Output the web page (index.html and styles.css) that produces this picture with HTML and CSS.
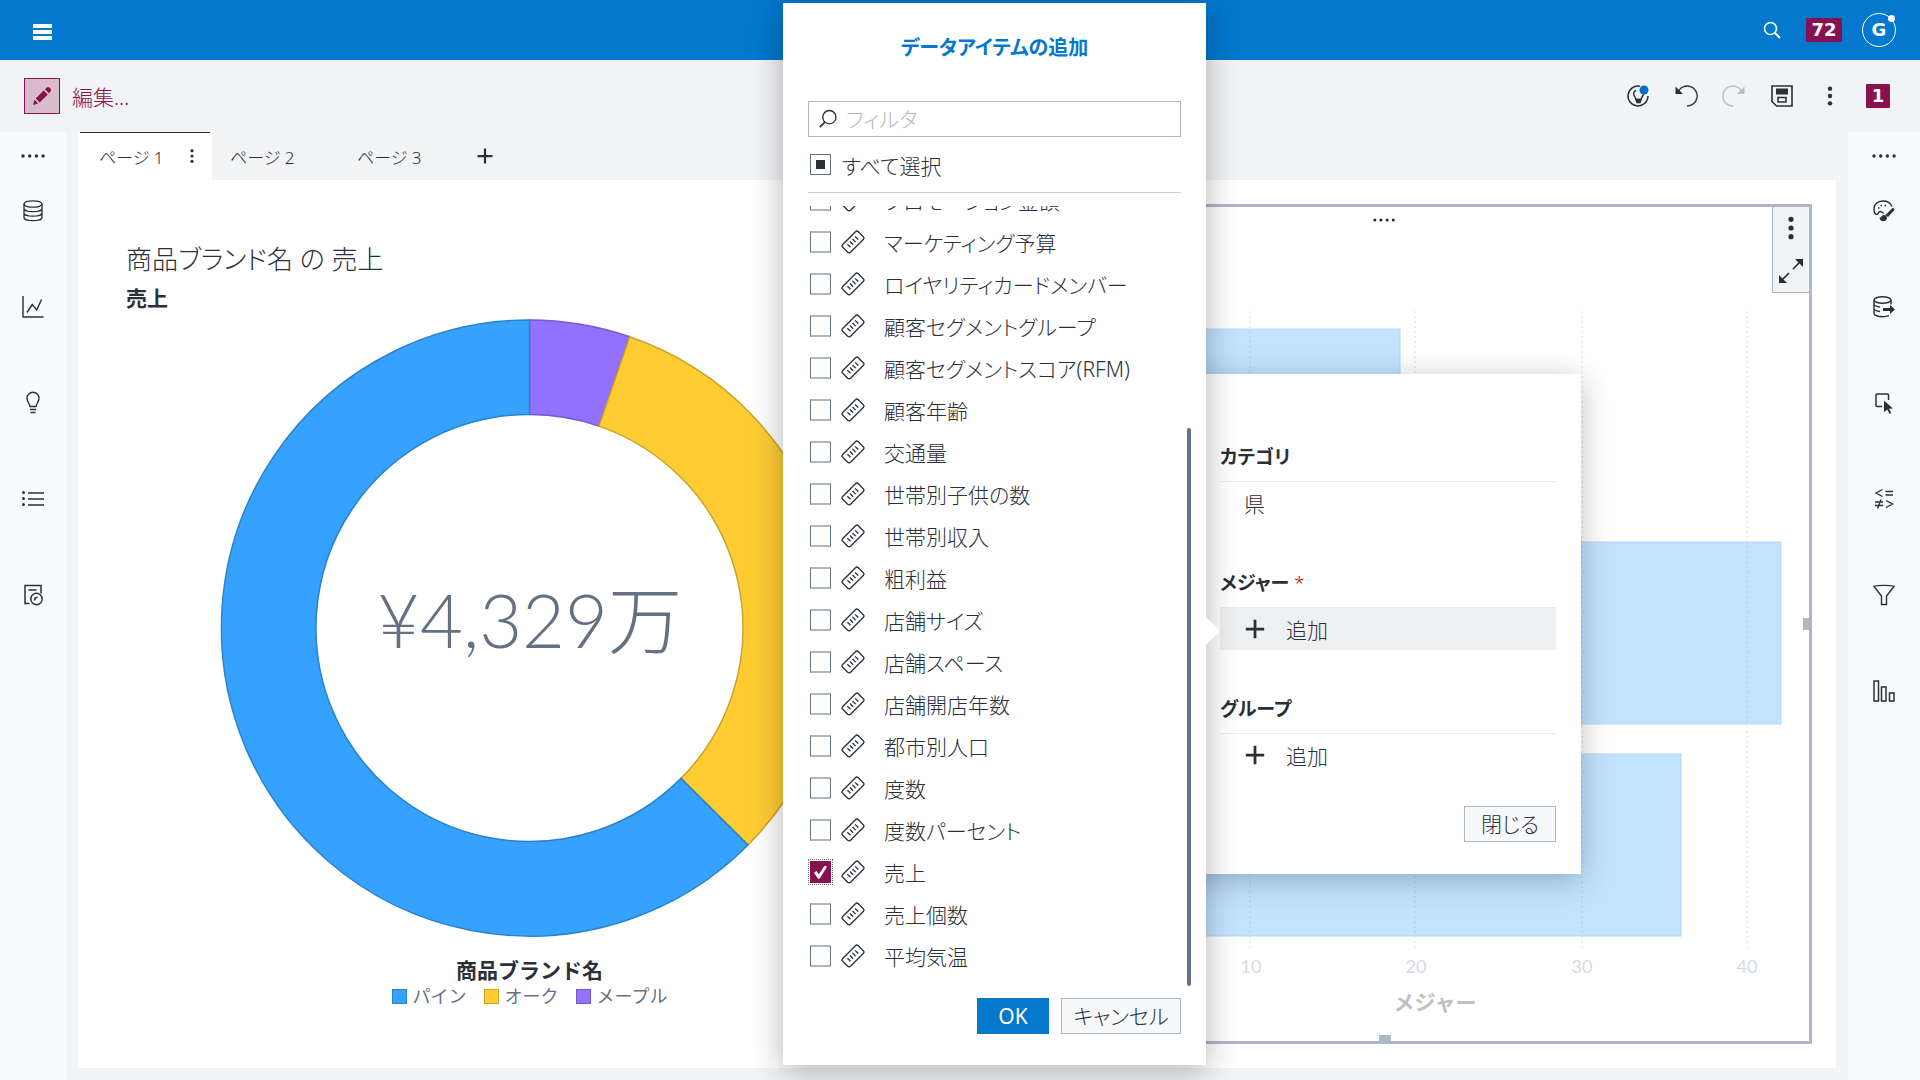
FILE: index.html
```html
<!DOCTYPE html>
<html lang="ja">
<head>
<meta charset="utf-8">
<meta name="viewport" content="width=device-width, initial-scale=1">
<title>レポートの編集</title>
<link rel="stylesheet" href="styles.css">
</head>
<body>
<svg class="sprite" aria-hidden="true">
  <symbol id="dots-h" viewBox="0 0 24 24"><g fill="currentColor"><circle cx="2" cy="12" r="1.7"/><circle cx="8.700" cy="12" r="1.7"/><circle cx="15.400" cy="12" r="1.7"/><circle cx="22.100" cy="12" r="1.7"/></g></symbol>
  <symbol id="dots-v" viewBox="0 0 24 24"><g fill="currentColor"><circle cx="12" cy="4" r="2.400"/><circle cx="12" cy="12" r="2.400"/><circle cx="12" cy="20" r="2.400"/></g></symbol>
  <symbol id="plus" viewBox="0 0 24 24"><path d="M12 2v20M2 12h20" fill="none" stroke="currentColor" stroke-width="3"/></symbol>
  <symbol id="ruler" viewBox="0 0 24 24"><g transform="rotate(-45 12 12)" fill="none" stroke="currentColor" stroke-width="1.300"><rect x="1" y="6.500" width="22" height="11" rx="2"/><path d="M6.500 9.500v4.500M10.200 9.500v4.500M13.800 9.500v4.500M17.500 9.500v4.500"/></g></symbol>
</svg>

<header class="topbar">
  <button class="icon-button menu-button" aria-label="メニュー">
    <svg width="20" height="16" viewBox="0 0 20 16"><path d="M0 0h19v4H0zM0 6h19v4H0zM0 12h19v4H0z" fill="currentColor"/></svg>
  </button>
  <div class="topbar-tools">
    <button class="icon-button" aria-label="検索">
      <svg width="18" height="18" viewBox="0 0 18 18" fill="none" stroke="currentColor" stroke-width="1.600"><circle cx="7.500" cy="7.500" r="6"/><path d="M12 12l5 5" stroke-width="2"/></svg>
    </button>
    <span class="badge badge-wide">72</span>
    <button class="avatar" aria-label="アカウント">G<span class="avatar-dot"></span></button>
  </div>
</header>

<div class="toolbar">
  <button class="edit-toggle">
    <span class="edit-icon"><svg width="20" height="20" viewBox="0 0 20 20" fill="currentColor"><path d="M1 19l1.400-5.200 3.800 3.800zM3.700 12.500l8-8 4 4-8 8zM13 3.300l1.700-1.700a2 2 0 0 1 2.700 0l1.200 1.200a2 2 0 0 1 0 2.700l-1.700 1.700z"/></svg></span>
    <span>編集...</span>
  </button>
  <div class="toolbar-tools">
    <button class="icon-button" aria-label="提案">
      <svg width="24" height="24" viewBox="0 0 24 24" fill="none" stroke="currentColor" stroke-width="1.500"><path d="M14 2.200A10 10 0 1 0 22 12"/><path d="M10 6.500C6.500 8 7.500 11 9 13l1 2.500h5l1-2.500c1-1.300 1.500-2 1.600-3" /><path d="M10 15.500h5l-1 3h-3z" fill="currentColor"/><circle cx="18" cy="6" r="4.500" class="dot-blue"/></svg>
    </button>
    <button class="icon-button" aria-label="元に戻す">
      <svg width="24" height="24" viewBox="0 0 24 24" fill="none" stroke="currentColor" stroke-width="1.400"><path d="M4.500 7A10 10 0 1 1 13 22"/><path d="M1.500 2.500V10H9z" fill="currentColor" stroke="none"/></svg>
    </button>
    <button class="icon-button" aria-label="やり直し" disabled>
      <svg width="24" height="24" viewBox="0 0 24 24" fill="none" stroke="currentColor" stroke-width="1.400"><path d="M19.500 7A10 10 0 1 0 11 22"/><path d="M22.500 2.500V10H15z" fill="currentColor" stroke="none"/></svg>
    </button>
    <button class="icon-button" aria-label="保存">
      <svg width="24" height="24" viewBox="0 0 24 24" fill="none" stroke="currentColor" stroke-width="1.600"><path d="M2 2h20v20H6.500L2 17.500z"/><path d="M6 4.500h12v6H6z" fill="currentColor" stroke="none"/><path d="M8 13.500h8v4.500H8z"/></svg>
    </button>
    <button class="icon-button" aria-label="その他"><svg width="22" height="22"><use href="#dots-v"/></svg></button>
    <span class="badge">1</span>
  </div>
</div>

<div class="workspace">
  <nav class="rail" aria-label="左ペイン">
    <button class="icon-button" aria-label="ペイン"><svg width="24" height="24"><use href="#dots-h"/></svg></button>
    <button class="icon-button" aria-label="データ"><svg width="24" height="24" viewBox="0 0 24 24" fill="none" stroke="currentColor" stroke-width="1.300"><ellipse cx="12" cy="5" rx="9" ry="3.200"/><path d="M3 5v13.500c0 1.800 4 3.200 9 3.200s9-1.400 9-3.200V5M3 9.500c0 1.800 4 3.200 9 3.200s9-1.400 9-3.200M3 14c0 1.800 4 3.200 9 3.200s9-1.400 9-3.200"/></svg></button>
    <button class="icon-button" aria-label="オブジェクト"><svg width="24" height="24" viewBox="0 0 24 24" fill="none" stroke="currentColor" stroke-width="1.400"><path d="M2 1v21h20.500M6 17.500l5.200-8 4.500 5.500 4.800-10.500"/></svg></button>
    <button class="icon-button" aria-label="提案"><svg width="24" height="24" viewBox="0 0 24 24" fill="none" stroke="currentColor" stroke-width="1.400"><path d="M9 15.500c0-2.500-3-4.500-3-8.300a6 6 0 0 1 12 0c0 3.800-3 5.800-3 8.300zM9 18.500h6M9.500 21.500h5"/></svg></button>
    <button class="icon-button" aria-label="アウトライン"><svg width="24" height="24" viewBox="0 0 24 24" fill="none" stroke="currentColor" stroke-width="1.500"><path d="M7 6h16M7 12h16M7 18h16"/><g fill="currentColor" stroke="none"><circle cx="2.500" cy="5.500" r="1.500"/><circle cx="2.500" cy="11.500" r="1.500"/><circle cx="2.500" cy="17.500" r="1.500"/></g></svg></button>
    <button class="icon-button" aria-label="レビュー"><svg width="24" height="24" viewBox="0 0 24 24" fill="none" stroke="currentColor" stroke-width="1.500"><path d="M8.500 20.500H4v-18h16v8M7.500 7h8"/><circle cx="15.500" cy="16" r="5.700"/><path d="M13.500 17.500c0-2 .8-3.200 3-3.300"/></svg></button>
  </nav>

  <main class="main">
    <div class="tabs" role="tablist">
      <div class="tab-current">
        <button class="tab" role="tab" aria-selected="true">ページ 1</button>
        <button class="icon-button" aria-label="ページのメニュー"><svg width="16" height="16"><use href="#dots-v"/></svg></button>
      </div>
      <button class="tab tab-idle" role="tab">ページ 2</button>
      <button class="tab tab-idle" role="tab">ページ 3</button>
      <button class="icon-button tab-add" aria-label="ページの追加"><svg width="18" height="18"><use href="#plus"/></svg></button>
    </div>

    <div class="canvas">
      <section class="donut-card">
        <h2 class="chart-title">商品ブランド名 の 売上</h2>
        <p class="chart-measure">売上</p>
        <svg class="donut" viewBox="0 0 620 620" role="img" aria-label="売上">
          <g stroke-width="1.500">
            <path class="slice-maple" d="M310 2A308 308 0 0 1 410.200 18.800L379.500 108.100A213.500 213.500 0 0 0 310 96.500Z"/>
            <path class="slice-oak" d="M410.200 18.800A308 308 0 0 1 528.500 527L461.500 460.400A213.500 213.500 0 0 0 379.500 108.100Z"/>
            <path class="slice-pine" d="M528.500 527A308 308 0 1 1 310 2V96.500A213.500 213.500 0 1 0 461.500 460.400Z"/>
          </g>
          <text class="donut-total" x="310" y="330" text-anchor="middle">¥4,329万</text>
        </svg>
        <h3 class="legend-title">商品ブランド名</h3>
        <ul class="legend">
          <li><span class="swatch swatch-pine"></span>パイン</li>
          <li><span class="swatch swatch-oak"></span>オーク</li>
          <li><span class="swatch swatch-maple"></span>メープル</li>
        </ul>
      </section>

      <section class="bar-card">
        <svg class="bars" viewBox="0 0 849 834" role="img" aria-label="メジャー">
          <g class="bar">
            <rect x="125" y="122" width="315" height="182"/>
            <rect x="125" y="335" width="696" height="182"/>
            <rect x="125" y="547" width="596" height="182"/>
          </g>
          <path class="gridline" d="M290 104V744M455 104V744M622 104V744M787 104V744"/>
          <g class="tick" text-anchor="middle"><text x="291" y="766">10</text><text x="456" y="766">20</text><text x="622" y="766">30</text><text x="787" y="766">40</text></g>
          <text class="axis-title" x="475" y="803" text-anchor="middle">メジャー</text>
        </svg>
        <svg class="drag-dots" width="22" height="24"><use href="#dots-h"/></svg>
        <div class="card-tools">
          <button class="icon-button" aria-label="オブジェクトのメニュー"><svg width="26" height="26"><use href="#dots-v"/></svg></button>
          <button class="icon-button" aria-label="最大化"><svg width="26" height="26" viewBox="0 0 26 26" fill="none" stroke="currentColor" stroke-width="1.700"><path d="M15 11L22 4M11 15L4 22"/><path d="M17 1h8v8zM1 17v8h8z" fill="currentColor" stroke="none"/></svg></button>
        </div>
        <span class="handle handle-right"></span>
        <span class="handle handle-bottom"></span>
      </section>
    </div>
  </main>

  <nav class="rail rail-right" aria-label="右ペイン">
    <button class="icon-button" aria-label="ペイン"><svg width="24" height="24"><use href="#dots-h"/></svg></button>
    <button class="icon-button" aria-label="オプション"><svg width="24" height="24" viewBox="0 0 24 24" fill="none" stroke="currentColor" stroke-width="1.400"><path d="M20 7.500C18.500 4 15 2 11 2 5.500 2 2 5.500 2 10c0 3 1 5.500 3 5.500 1.500 0 .8-3 3-3s2.500 1 3.500 2"/><path d="M6 9h1.500M8.500 6.500H10M12.500 6.500H14" stroke-width="1.700"/><path d="M13.500 16l6.500-6.500c1.500-1.200 3.200.3 2 2L16 18zM7.500 18.500c1.800.8 2-2.500 4.500-2.500 2 0 3 1.500 3 3 0 2-1.800 3.300-4 3.300-2 0-3.300-1.500-3.500-3.800z" fill="currentColor" stroke="none"/></svg></button>
    <button class="icon-button" aria-label="役割"><svg width="24" height="24" viewBox="0 0 24 24" fill="none" stroke="currentColor" stroke-width="1.400"><ellipse cx="10.500" cy="5" rx="8.500" ry="3.200"/><path d="M2 5v13.500c0 1.800 4 3.200 8.500 3.200 2.500 0 4.500-.4 6.500-1M19 5v4.500M2 9.500c.5 1.200 2.500 2 6 2.500M2 14c.5 1.200 2.500 2 6 2.500"/><path d="M11 13h7v-3l5 4.500-5 4.500v-3h-7z" fill="currentColor" stroke="none"/></svg></button>
    <button class="icon-button" aria-label="アクション"><svg width="24" height="24" viewBox="0 0 24 24" fill="none" stroke="currentColor" stroke-width="1.500"><path d="M10 15.500H5a1 1 0 0 1-1-1V4a1 1 0 0 1 1-1h10.500a1 1 0 0 1 1 1v5"/><path d="M12 9.500l9 8-4 .3 2.300 4.200-1.800.9-2.200-4.300-3.300 2.700z" fill="currentColor" stroke="none"/></svg></button>
    <button class="icon-button" aria-label="ルール"><svg width="24" height="24" viewBox="0 0 24 24" fill="none" stroke="currentColor" stroke-width="1.400"><path d="M10.500 2.500L4 6l6.500 3.500M13.500 4.500H21M13.500 8H21M3 15h8M3 18.500h8M9 12.500l-3.500 9M14 13.500l6.500 3.500-6.500 3.500"/></svg></button>
    <button class="icon-button" aria-label="フィルタ"><svg width="24" height="24" viewBox="0 0 24 24" fill="none" stroke="currentColor" stroke-width="1.400"><path d="M2 3.500C5 2 19 2 22 3.500L14.500 13v8.500h-5V13z"/></svg></button>
    <button class="icon-button" aria-label="ランク"><svg width="24" height="24" viewBox="0 0 24 24" fill="none" stroke="currentColor" stroke-width="1.500"><path d="M2 2h4.500v20H2zM9.500 8H14v14H9.500zM17.500 14H22v8h-4.500z"/></svg></button>
  </nav>
</div>

<section class="roles-popup" aria-label="役割の割り当て">
  <div class="role">
    <h3 class="role-title">カテゴリ</h3>
    <button class="role-item">県</button>
  </div>
  <div class="role">
    <h3 class="role-title">メジャー <span class="required">*</span></h3>
    <button class="role-item role-item-active"><svg width="22" height="22"><use href="#plus"/></svg>追加</button>
  </div>
  <div class="role">
    <h3 class="role-title">グループ</h3>
    <button class="role-item"><svg width="22" height="22"><use href="#plus"/></svg>追加</button>
  </div>
  <button class="button close-button">閉じる</button>
</section>

<section class="items-dialog" role="dialog" aria-labelledby="dialog-title">
  <h2 class="dialog-title" id="dialog-title">データアイテムの追加</h2>
  <div class="filter">
    <svg width="20" height="20" viewBox="0 0 22 22" fill="none" stroke="currentColor" stroke-width="1.500"><circle cx="12.500" cy="9" r="7.300"/><path d="M7.500 14.500L2 20" stroke-width="2"/></svg>
    <input class="filter-input" type="text" placeholder="フィルタ" aria-label="フィルタ">
  </div>
  <label class="select-all"><input class="checkbox checkbox-mixed" type="checkbox"><span>すべて選択</span></label>
  <div class="list-frame">
    <ul class="item-list">
      <li><label class="item"><input class="checkbox" type="checkbox"><svg width="24" height="24"><use href="#ruler"/></svg><span>プロモーション金額</span></label></li>
      <li><label class="item"><input class="checkbox" type="checkbox"><svg width="24" height="24"><use href="#ruler"/></svg><span>マーケティング予算</span></label></li>
      <li><label class="item"><input class="checkbox" type="checkbox"><svg width="24" height="24"><use href="#ruler"/></svg><span>ロイヤリティカードメンバー</span></label></li>
      <li><label class="item"><input class="checkbox" type="checkbox"><svg width="24" height="24"><use href="#ruler"/></svg><span>顧客セグメントグループ</span></label></li>
      <li><label class="item"><input class="checkbox" type="checkbox"><svg width="24" height="24"><use href="#ruler"/></svg><span>顧客セグメントスコア(RFM)</span></label></li>
      <li><label class="item"><input class="checkbox" type="checkbox"><svg width="24" height="24"><use href="#ruler"/></svg><span>顧客年齢</span></label></li>
      <li><label class="item"><input class="checkbox" type="checkbox"><svg width="24" height="24"><use href="#ruler"/></svg><span>交通量</span></label></li>
      <li><label class="item"><input class="checkbox" type="checkbox"><svg width="24" height="24"><use href="#ruler"/></svg><span>世帯別子供の数</span></label></li>
      <li><label class="item"><input class="checkbox" type="checkbox"><svg width="24" height="24"><use href="#ruler"/></svg><span>世帯別収入</span></label></li>
      <li><label class="item"><input class="checkbox" type="checkbox"><svg width="24" height="24"><use href="#ruler"/></svg><span>粗利益</span></label></li>
      <li><label class="item"><input class="checkbox" type="checkbox"><svg width="24" height="24"><use href="#ruler"/></svg><span>店舗サイズ</span></label></li>
      <li><label class="item"><input class="checkbox" type="checkbox"><svg width="24" height="24"><use href="#ruler"/></svg><span>店舗スペース</span></label></li>
      <li><label class="item"><input class="checkbox" type="checkbox"><svg width="24" height="24"><use href="#ruler"/></svg><span>店舗開店年数</span></label></li>
      <li><label class="item"><input class="checkbox" type="checkbox"><svg width="24" height="24"><use href="#ruler"/></svg><span>都市別人口</span></label></li>
      <li><label class="item"><input class="checkbox" type="checkbox"><svg width="24" height="24"><use href="#ruler"/></svg><span>度数</span></label></li>
      <li><label class="item"><input class="checkbox" type="checkbox"><svg width="24" height="24"><use href="#ruler"/></svg><span>度数パーセント</span></label></li>
      <li><label class="item"><input class="checkbox" type="checkbox" checked><svg width="24" height="24"><use href="#ruler"/></svg><span>売上</span></label></li>
      <li><label class="item"><input class="checkbox" type="checkbox"><svg width="24" height="24"><use href="#ruler"/></svg><span>売上個数</span></label></li>
      <li><label class="item"><input class="checkbox" type="checkbox"><svg width="24" height="24"><use href="#ruler"/></svg><span>平均気温</span></label></li>
    </ul>
    <span class="scroll-thumb"></span>
  </div>
  <div class="dialog-actions">
    <button class="button button-primary">OK</button>
    <button class="button button-cancel">キャンセル</button>
  </div>
</section>
</body>
</html>
```

FILE: styles.css
```css
:root {
  --blue: #0378cd;
  --plum: #87124f;
  --ink: #2a3038;
  --slate: #637183;
  --line: #aeb7c4;
  --page: #f2f3f5;
  --rail: #f9fafc;
}

* {
  box-sizing: border-box;
}

body {
  margin: 0;
  height: 100vh;
  display: flex;
  flex-direction: column;
  position: relative;
  overflow: hidden;
  background: var(--page);
  color: var(--ink);
  font-family: "Noto Sans", "Noto Sans CJK JP", sans-serif;
  font-size: 21px;
  font-weight: 300;
  font-feature-settings: "palt";
}

h2, h3, p, ul {
  margin: 0;
  padding: 0;
  list-style: none;
}

button, input {
  margin: 0;
  padding: 0;
  border: 0;
  background: none;
  color: inherit;
  font: inherit;
  font-feature-settings: inherit;
}

svg {
  display: block;
  flex: none;
}

.sprite {
  position: absolute;
  width: 0;
  height: 0;
}

.icon-button {
  display: flex;
  align-items: center;
  justify-content: center;
}

.icon-button:disabled {
  color: #b9bdc4;
}

.dot-blue {
  fill: #0071c6;
  stroke: none;
}

/* Top bar */

.topbar {
  flex: none;
  height: 60px;
  padding: 0 24px 0 33px;
  display: flex;
  align-items: center;
  justify-content: space-between;
  background: var(--blue);
  color: #fff;
}

.menu-button {
  padding-top: 4px;
}

.topbar-tools {
  display: flex;
  align-items: center;
  gap: 20px;
}

.topbar-tools .icon-button {
  margin-right: 5px;
}

.badge {
  width: 24px;
  height: 24px;
  display: flex;
  align-items: center;
  justify-content: center;
  border-radius: 1px;
  background: var(--plum);
  color: #fff;
  font: bold 18px/24px "DejaVu Sans", sans-serif;
}

.badge-wide {
  width: 36px;
}

.avatar {
  position: relative;
  width: 34px;
  height: 34px;
  border: 1px solid #fff;
  border-radius: 50%;
  font: bold 18px/30px "DejaVu Sans", sans-serif;
}

.avatar-dot {
  position: absolute;
  top: 1px;
  right: 0;
  width: 7px;
  height: 7px;
  border-radius: 50%;
  background: #fff;
}

/* Report toolbar */

.toolbar {
  flex: none;
  height: 72px;
  padding: 0 30px 0 24px;
  display: flex;
  align-items: center;
  justify-content: space-between;
}

.edit-toggle {
  display: flex;
  align-items: center;
  gap: 12px;
  color: var(--plum);
}

.edit-icon {
  width: 36px;
  height: 36px;
  display: grid;
  place-items: center;
  border: 1px solid var(--plum);
  background: #d9bccc;
}

.toolbar-tools {
  display: flex;
  align-items: center;
  gap: 24px;
}

.toolbar-tools .icon-button {
  width: 24px;
}

/* Workspace */

.workspace {
  flex: 1;
  min-height: 0;
  display: flex;
  gap: 12px;
}

.rail {
  flex: none;
  width: 66px;
  padding-top: 12px;
  display: flex;
  flex-direction: column;
  align-items: center;
  gap: 72px;
  background: var(--rail);
}

.rail-right {
  width: 72px;
}

.rail .icon-button:first-child {
  margin-bottom: -41px;
}

.main {
  flex: 1;
  min-width: 0;
  padding-bottom: 12px;
  display: flex;
  flex-direction: column;
}

.tabs {
  flex: none;
  height: 48px;
  display: flex;
  font-size: 17px;
}

.tab {
  text-align: left;
}

.tab-current {
  width: 134px;
  padding: 0 12px 0 21px;
  display: flex;
  align-items: center;
  justify-content: space-between;
  background: linear-gradient(var(--ink), var(--ink)) 2px 0 / 130px 1px no-repeat #fff;
}

.tab-idle {
  width: 127px;
  padding-left: 18px;
}

.tab-add {
  width: 38px;
}

.canvas {
  flex: 1;
  min-height: 0;
  padding: 24px;
  display: grid;
  grid-template-columns: 1fr 1fr;
  background: #fff;
}

/* Donut chart */

.donut-card {
  min-height: 0;
  padding: 36px 0 34px;
  display: flex;
  flex-direction: column;
}

.chart-title {
  padding-left: 24px;
  font-size: 26px;
  font-weight: 300;
  line-height: 38px;
}

.chart-measure {
  padding-left: 24px;
  font-weight: 700;
  line-height: 40px;
}

.donut {
  flex: 1;
  min-height: 0;
  width: 100%;
}

.slice-maple { fill: #9470ff; stroke: #7759cc; }
.slice-oak { fill: #ffcc32; stroke: #cca328; }
.slice-pine { fill: #35a2ff; stroke: #2a82cc; }

.donut-total {
  fill: var(--slate);
  font-family: Lato, "Noto Sans CJK JP", sans-serif;
  font-size: 74px;
  font-weight: 300;
}

.legend-title {
  margin-top: 20px;
  font-size: 21px;
  font-weight: 700;
  line-height: 24px;
  text-align: center;
  font-feature-settings: normal;
}

.legend {
  display: flex;
  justify-content: center;
  gap: 17px;
  color: var(--slate);
  font-size: 18px;
  font-weight: 400;
  line-height: 28px;
  font-feature-settings: normal;
}

.legend li {
  display: flex;
  align-items: center;
  gap: 6px;
}

.swatch {
  width: 15px;
  height: 15px;
  border: 1px solid;
}

.swatch-pine { background: #35a2ff; border-color: #2a82cc; }
.swatch-oak { background: #ffcc32; border-color: #cca328; }
.swatch-maple { background: #9470ff; border-color: #7759cc; }

/* Bar chart */

.bar-card {
  position: relative;
  min-height: 0;
  border: 3px solid var(--line);
}

.bars {
  width: 100%;
  height: 100%;
}

.bar {
  fill: #c2e3ff;
  stroke: #b9d6ef;
}

.gridline {
  fill: none;
  stroke: #8896a8;
  stroke-opacity: .3;
  stroke-dasharray: 2 3;
}

.tick {
  fill: #d6dae0;
  font-family: Lato, sans-serif;
  font-size: 18px;
  font-weight: 400;
}

.axis-title {
  fill: #bfc1c3;
  font-size: 21px;
  font-weight: 700;
  font-feature-settings: normal;
}

.drag-dots {
  position: absolute;
  top: 1px;
  left: calc(50% - 12px);
}

.card-tools {
  position: absolute;
  top: 0;
  right: 0;
  width: 37px;
  height: 86px;
  padding: 8px 0;
  display: flex;
  flex-direction: column;
  justify-content: space-between;
  align-items: center;
  border: 1px solid var(--line);
  border-width: 0 0 1px 1px;
  background: var(--page);
}

.handle {
  position: absolute;
  background: var(--line);
}

.handle-right {
  top: calc(50% - 6px);
  right: 0;
  width: 6px;
  height: 12px;
}

.handle-bottom {
  bottom: 0;
  left: calc(50% - 6px);
  width: 12px;
  height: 6px;
}

/* Popups */

.button {
  height: 36px;
  border: 1px solid var(--line);
  background: #f7f8fa;
  line-height: 32px;
  text-align: center;
}

.roles-popup {
  position: absolute;
  top: 374px;
  right: 339px;
  width: 399px;
  padding: 62px 25px 32px 38px;
  display: flex;
  flex-direction: column;
  gap: 38px;
  background: #fff;
  box-shadow: 0 6px 30px rgba(0, 0, 0, .25);
}

.role-title {
  height: 46px;
  border-bottom: 1px solid #e9ebed;
  font-size: 19px;
  font-weight: 700;
  line-height: 42px;
}

.required {
  color: #d00;
  font-weight: 300;
}

.role-item {
  width: 100%;
  height: 42px;
  padding-left: 24px;
  display: flex;
  align-items: center;
  gap: 20px;
}

.role-item-active {
  background: #eff0f2;
}

.close-button {
  align-self: flex-end;
  width: 92px;
  margin-top: -8px;
}

.items-dialog {
  position: absolute;
  top: 3px;
  right: 714px;
  bottom: 15px;
  width: 423px;
  padding: 24px 25px 31px;
  display: flex;
  flex-direction: column;
  background: #fff;
  box-shadow: 0 6px 30px rgba(0, 0, 0, .3);
}

.items-dialog::after {
  content: "";
  position: absolute;
  top: 613px;
  right: -14px;
  border: 15px solid transparent;
  border-right-width: 0;
  border-left: 15px solid #fff;
}

.dialog-title {
  color: var(--blue);
  font-size: 20px;
  font-weight: 700;
  line-height: 42px;
  text-align: center;
}

.filter {
  height: 36px;
  margin-top: 32px;
  padding-left: 9px;
  display: flex;
  align-items: center;
  gap: 8px;
  border: 1px solid var(--line);
}

.filter-input {
  flex: 1;
  min-width: 0;
  outline: 0;
}

.filter-input::placeholder {
  color: #b0b8c3;
}

.select-all {
  height: 56px;
  padding: 0 2px;
  display: flex;
  align-items: center;
  gap: 11px;
  border-bottom: 1px solid #c7cdd6;
}

.checkbox {
  appearance: none;
  flex: none;
  width: 21px;
  height: 22px;
  border: 1px solid var(--slate);
  border-top: 2px solid var(--line);
  border-bottom: 2px solid var(--line);
  display: grid;
  place-items: center;
}

.checkbox-mixed {
  height: 21px;
  border: 1px solid var(--slate);
}

.checkbox-mixed::before {
  content: "";
  width: 9px;
  height: 9px;
  background: var(--ink);
}

.checkbox:checked {
  border-color: var(--plum);
  background: var(--plum);
  outline: 1px dotted var(--slate);
  outline-offset: 1px;
}

.checkbox:checked::before {
  content: "";
  width: 13px;
  height: 13px;
  background: #fff;
  clip-path: polygon(0 55%, 18% 42%, 38% 68%, 82% 0, 100% 10%, 44% 100%, 30% 100%);
}

.list-frame {
  position: relative;
  flex: 1;
  min-height: 0;
  margin-top: 13px;
}

.item-list {
  height: 100%;
  padding-bottom: 9px;
  display: flex;
  flex-direction: column;
  justify-content: flex-end;
  overflow: hidden;
}

.item {
  height: 42px;
  padding-left: 2px;
  display: flex;
  align-items: center;
}

.item svg {
  margin: 0 19px 0 10px;
}

.scroll-thumb {
  position: absolute;
  right: -10px;
  bottom: 0;
  width: 4px;
  height: 558px;
  border-radius: 2px;
  background: var(--slate);
}

.dialog-actions {
  margin-top: 12px;
  display: flex;
  justify-content: flex-end;
  gap: 12px;
}

.button-primary {
  width: 72px;
  border-color: var(--blue);
  background: var(--blue);
  color: #fff;
  font-weight: 400;
}

.button-cancel {
  width: 120px;
}
```
